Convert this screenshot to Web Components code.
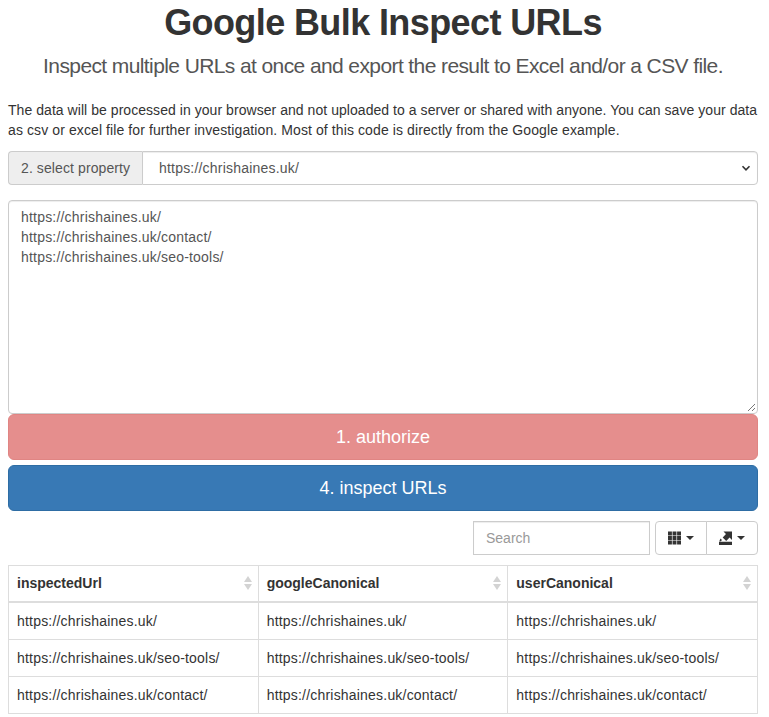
<!DOCTYPE html>
<html>
<head>
<meta charset="utf-8">
<title>Google Bulk Inspect URLs</title>
<style>
html, body { margin: 0; padding: 0; background: #fff; }
body { font-family: "Liberation Sans", Arial, sans-serif; font-size: 14px; line-height: 20px; color: #333; }
inspect-app { width: 750px; margin-left: 8px; }
p span { letter-spacing: .1px; }
</style>
</head>
<body>
<inspect-app>
  <page-header title="Google Bulk Inspect URLs" lead="Inspect multiple URLs at once and export the result to Excel and/or a CSV file."></page-header>
  <p>The data will be processed in your browser and not uploaded to a server or shared with anyone. You can save your data<br><span>as csv or excel file for further investigation. Most of this code is directly from the Google example.</span></p>
  <property-select label="2. select property" value="https://chrishaines.uk/"></property-select>
  <url-box>https://chrishaines.uk/
https://chrishaines.uk/contact/
https://chrishaines.uk/seo-tools/</url-box>
  <big-button kind="authorize">1. authorize</big-button>
  <big-button kind="inspect">4. inspect URLs</big-button>
  <table-toolbar></table-toolbar>
  <result-table></result-table>
</inspect-app>

<script>
class InspectApp extends HTMLElement {
  constructor() {
    super();
    this.attachShadow({ mode: "open" });
  }
  connectedCallback() {
    this.shadowRoot.innerHTML = `
<style>
:host { display: block; }
::slotted(p) { margin: 0 0 10px; letter-spacing: .05px; white-space: nowrap; }
</style>
<slot></slot>
`;
  }
}

class PageHeader extends HTMLElement {
  constructor() {
    super();
    this.attachShadow({ mode: "open" });
  }
  connectedCallback() {
    const title = this.getAttribute("title");
    const lead = this.getAttribute("lead");
    this.shadowRoot.innerHTML = `
<style>
:host { display: block; text-align: center; padding-bottom: 22px; }
h1 { margin: 0; padding-top: 3px; font-size: 36px; line-height: 39.6px; font-weight: bold; letter-spacing: -.6px; color: #333; }
.lead { margin: 11px 0 0; font-size: 21px; line-height: 24px; font-weight: 300; letter-spacing: -.6px; color: #555; }
</style>
<h1>${title}</h1>
<p class="lead">${lead}</p>
`;
  }
}

class PropertySelect extends HTMLElement {
  constructor() {
    super();
    this.attachShadow({ mode: "open" });
  }
  connectedCallback() {
    const label = this.getAttribute("label");
    const value = this.getAttribute("value");
    this.shadowRoot.innerHTML = `
<style>
:host { display: flex; height: 34px; margin-top: 11px; font-size: 14px; }
.addon { display: flex; align-items: center; box-sizing: border-box; width: 134px; padding: 0 12px; background: #eee; color: #555; border: 1px solid #ccc; border-right: 0; border-radius: 4px 0 0 4px; letter-spacing: .1px; white-space: nowrap; }
.control { flex: 1; display: flex; align-items: center; justify-content: space-between; box-sizing: border-box; padding: 0 6px 0 16px; background: #fff; color: #555; border: 1px solid #ccc; border-radius: 0 4px 4px 0; box-shadow: inset 0 1px 1px rgba(0,0,0,.075); letter-spacing: .2px; }
svg { width: 10px; height: 10px; }
</style>
<span class="addon">${label}</span>
<div class="control">
  <span>${value}</span>
  <svg viewBox="0 0 10 10"><path d="M1.5 3.2 L5 6.8 L8.5 3.2" fill="none" stroke="#333" stroke-width="1.6"/></svg>
</div>
`;
  }
}

class UrlBox extends HTMLElement {
  constructor() {
    super();
    this.attachShadow({ mode: "open" });
  }
  connectedCallback() {
    this.shadowRoot.innerHTML = `
<style>
:host { display: block; position: relative; box-sizing: border-box; height: 214px; margin-top: 15px; padding: 6px 12px; background: #fff; color: #555; border: 1px solid #ccc; border-radius: 4px; box-shadow: inset 0 1px 1px rgba(0,0,0,.075); }
.text { white-space: pre-line; letter-spacing: .2px; }
svg { position: absolute; right: 1px; bottom: 1px; width: 10px; height: 10px; }
</style>
<div class="text"><slot></slot></div>
<svg viewBox="0 0 10 10"><path d="M9 2 L2 9 M9 6 L6 9" stroke="#777" stroke-width="1" fill="none"/></svg>
`;
  }
}

class BigButton extends HTMLElement {
  constructor() {
    super();
    this.attachShadow({ mode: "open" });
  }
  connectedCallback() {
    this.shadowRoot.innerHTML = `
<style>
:host { display: flex; align-items: center; justify-content: center; box-sizing: border-box; height: 46px; font-size: 18px; color: #fff; border: 1px solid; border-radius: 6px; }
:host([kind="authorize"]) { background: #e58e8d; border-color: #e08583; }
:host([kind="inspect"]) { background: #3879b5; border-color: #2e6da4; margin-top: 5px; }
</style>
<slot></slot>
`;
  }
}

class TableToolbar extends HTMLElement {
  constructor() {
    super();
    this.attachShadow({ mode: "open" });
  }
  connectedCallback() {
    this.shadowRoot.innerHTML = `
<style>
:host { display: flex; justify-content: flex-end; gap: 5px; height: 34px; margin-top: 10px; }
.search { display: flex; align-items: center; box-sizing: border-box; width: 177px; padding: 0 12px; color: #999; border: 1px solid #ccc; box-shadow: inset 0 1px 1px rgba(0,0,0,.075); }
.group { display: flex; }
.btn { display: flex; align-items: center; justify-content: center; gap: 5px; box-sizing: border-box; height: 34px; border: 1px solid #ccc; background: #fff; }
.btn.columns { width: 52px; border-radius: 4px 0 0 4px; }
.btn.export { width: 52px; margin-left: -1px; border-radius: 0 4px 4px 0; }
.caret { width: 0; height: 0; border-top: 4px solid #333; border-left: 4px solid transparent; border-right: 4px solid transparent; }
svg { display: block; width: 13px; height: 14px; }
</style>
<div class="search">Search</div>
<div class="group">
  <div class="btn columns">
    <svg viewBox="0 0 13 14" fill="#333"><path d="M0 .5h3.9v4H0zM4.55 .5h3.9v4h-3.9zM9.1 .5H13v4H9.1zM0 5.1h3.9v3.8H0zM4.55 5.1h3.9v3.8h-3.9zM9.1 5.1H13v3.8H9.1zM0 9.5h3.9v4H0zM4.55 9.5h3.9v4h-3.9zM9.1 9.5H13v4H9.1z"/></svg>
    <span class="caret"></span>
  </div>
  <div class="btn export">
    <svg viewBox="0 0 13 14" fill="#333"><path d="M0 10.8h13V14H0zM4.5 .5H13V9l-2.4-2.4L7.2 10 3.7 6.5 7 3zM1.5 7.5l1.5 1.5-1.2 1.2H.3z"/></svg>
    <span class="caret"></span>
  </div>
</div>
`;
  }
}

class ResultTable extends HTMLElement {
  constructor() {
    super();
    this.attachShadow({ mode: "open" });
  }
  connectedCallback() {
    const columns = ["inspectedUrl", "googleCanonical", "userCanonical"];
    const rows = ["https://chrishaines.uk/", "https://chrishaines.uk/seo-tools/", "https://chrishaines.uk/contact/"];
    const sort = `<svg viewBox="0 0 8 14"><path d="M4 0 L8 6 H0z" fill="#d3d3d3"/><path d="M4 14 L8 8 H0z" fill="#d3d3d3"/></svg>`;
    this.shadowRoot.innerHTML = `
<style>
:host { display: block; margin-top: 10px; }
table { width: 100%; border-collapse: collapse; table-layout: fixed; border: 1px solid #ddd; }
th, td { border: 1px solid #ddd; padding: 8px; line-height: 20px; text-align: left; }
td { letter-spacing: .2px; }
th { position: relative; padding-top: 7px; font-weight: bold; border-bottom: 2px solid #ddd; }
th svg { position: absolute; right: 6px; top: 10px; width: 8px; height: 14px; }
</style>
<table>
  <thead><tr>${columns.map(c => `<th>${c}${sort}</th>`).join("")}</tr></thead>
  <tbody>${rows.map(r => `<tr>${columns.map(() => `<td>${r}</td>`).join("")}</tr>`).join("")}</tbody>
</table>
`;
  }
}

customElements.define("inspect-app", InspectApp);
customElements.define("page-header", PageHeader);
customElements.define("property-select", PropertySelect);
customElements.define("url-box", UrlBox);
customElements.define("big-button", BigButton);
customElements.define("table-toolbar", TableToolbar);
customElements.define("result-table", ResultTable);
</script>
</body>
</html>
